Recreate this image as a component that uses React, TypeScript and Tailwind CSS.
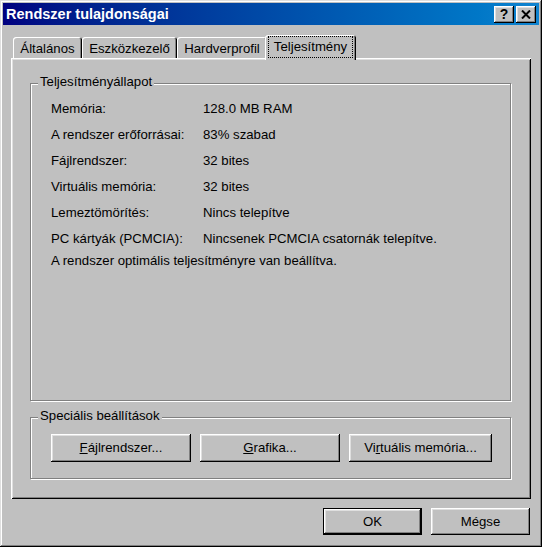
import React from 'react';

const rows = [
  { label: 'Memória:', value: '128.0 MB RAM' },
  { label: 'A rendszer erőforrásai:', value: '83% szabad' },
  { label: 'Fájlrendszer:', value: '32 bites' },
  { label: 'Virtuális memória:', value: '32 bites' },
  { label: 'Lemeztömörítés:', value: 'Nincs telepítve' },
  { label: 'PC kártyák (PCMCIA):', value: 'Nincsenek PCMCIA csatornák telepítve.' },
];

const raised =
  'shadow-[inset_-1px_-1px_0_#000,inset_1px_1px_0_#fff,inset_-2px_-2px_0_#808080,inset_2px_2px_0_#dfdfdf]';

const Tab = ({ label, width }: { label: string; width: string }) => (
  <div
    className={`${width} h-[21px] pt-[4px] text-center leading-[16px] rounded-t-[3px] shadow-[inset_1px_1px_0_#fff,inset_-1px_0_0_#000,inset_-2px_0_0_#808080]`}
  >
    {label}
  </div>
);

const Group = ({ title, className, children }: any) => (
  <div
    className={`flex flex-col border border-[#808080] shadow-[1px_1px_0_#fff,inset_1px_1px_0_#fff] ${className}`}
  >
    <span className="self-start ml-[7px] -mt-[10px] px-[2px] h-[16px] leading-[16px] bg-[#c0c0c0]">
      {title}
    </span>
    {children}
  </div>
);

const Btn = ({ children, width }: any) => (
  <button className={`${width} h-[28px] bg-[#c0c0c0] ${raised} leading-[16px]`}>{children}</button>
);

export default function App() {
  return (
    <div className="w-[542px] h-[547px] bg-[#c0c0c0] p-[3px] flex flex-col font-['Liberation_Sans',Arial,sans-serif] text-[13.2px] text-black shadow-[inset_-1px_-1px_0_#000,inset_1px_1px_0_#dfdfdf,inset_-2px_-2px_0_#808080,inset_2px_2px_0_#fff]">
      {/* title bar */}
      <div className="h-[22px] flex items-center pl-[3px] pr-[3px] bg-gradient-to-r from-[#000080] to-[#1084d0]">
        <span className="flex-1 text-white font-bold text-[14.5px] leading-[16px]">Rendszer tulajdonságai</span>
        <button className={`w-[20px] h-[17px] bg-[#c0c0c0] ${raised} flex items-center justify-center font-bold text-[14px] leading-[14px] pb-[1px]`}>
          ?
        </button>
        <button className={`ml-[2px] w-[20px] h-[17px] bg-[#c0c0c0] ${raised} flex items-center justify-center`}>
          <svg width="10" height="9" viewBox="0 0 10 9">
            <path d="M1 0.5 L9 8.5 M9 0.5 L1 8.5" stroke="#000" strokeWidth="2" fill="none" />
          </svg>
        </button>
      </div>

      <div className="flex-1 flex flex-col px-[8px]">
        {/* tabs */}
        <div className="mt-[10px] h-[23px] pl-[2px] flex items-end">
          <Tab label="Általános" width="w-[69px]" />
          <Tab label="Eszközkezelő" width="w-[95px]" />
          <Tab label="Hardverprofil" width="w-[90px]" />
          <div className="relative z-10 -ml-[2px] -mb-[2px] w-[91px] h-[25px] pt-[1px] px-[3px] bg-[#c0c0c0] rounded-t-[3px] shadow-[inset_1px_1px_0_#fff,inset_-1px_0_0_#000,inset_-2px_0_0_#808080]">
            <div className="border border-dotted border-black py-[2px] text-center leading-[16px]">Teljesítmény</div>
          </div>
        </div>

        {/* panel */}
        <div className="h-[441px] flex flex-col gap-[16px] pt-[25px] pl-[19px] pr-[20px] pb-[20px] shadow-[inset_1px_1px_0_#fff,inset_-1px_-1px_0_#000,inset_2px_2px_0_#dfdfdf,inset_-2px_-2px_0_#808080]">
          <Group title="Teljesítményállapot" className="flex-1">
            <div className="pt-[6px] pl-[20px]">
              {rows.map((r) => (
                <div key={r.label} className="grid grid-cols-[152px_1fr] leading-[26px]">
                  <span>{r.label}</span>
                  <span>{r.value}</span>
                </div>
              ))}
              <div className="leading-[18px]">A rendszer optimális teljesítményre van beállítva.</div>
            </div>
          </Group>
          <Group title="Speciális beállítások" className="h-[62px]">
            <div className="mt-[10px] pl-[20px] flex gap-[9px]">
              <Btn width="w-[140px]">
                <u>F</u>ájlrendszer...
              </Btn>
              <Btn width="w-[140px]">
                <u>G</u>rafika...
              </Btn>
              <Btn width="w-[143px]">
                Vi<u>r</u>tuális memória...
              </Btn>
            </div>
          </Group>
        </div>

        {/* dialog buttons */}
        <div className="mt-[9px] pr-[1px] flex justify-end gap-[9px]">
          <button className="w-[99px] h-[27px] border border-black bg-[#c0c0c0] shadow-[inset_-1px_-1px_0_#000,inset_1px_1px_0_#fff,inset_-2px_-2px_0_#808080,inset_2px_2px_0_#dfdfdf]">
            OK
          </button>
          <button className={`w-[99px] h-[27px] bg-[#c0c0c0] ${raised}`}>Mégse</button>
        </div>
      </div>
    </div>
  );
}
